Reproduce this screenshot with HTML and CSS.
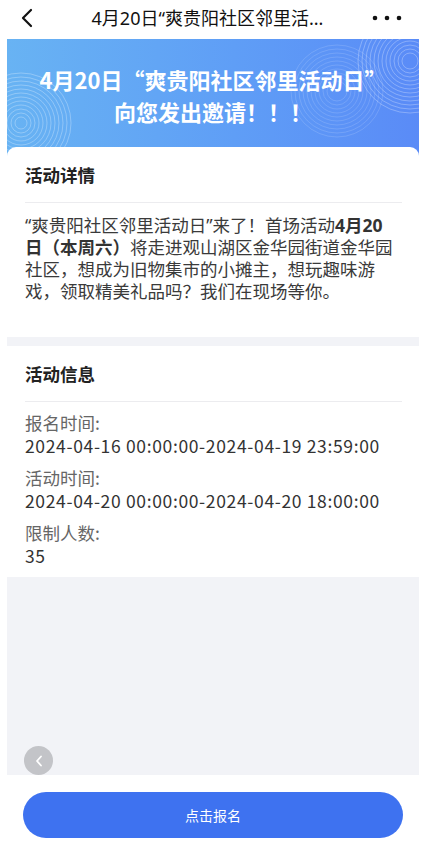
FILE: index.html
```html
<!DOCTYPE html>
<html lang="zh-CN">
<head>
<meta charset="utf-8">
<meta name="viewport" content="width=device-width, initial-scale=1">
<title>活动详情</title>
<link rel="stylesheet" href="styles.css">
</head>
<body>
<div class="page">
  <header class="topbar">
    <svg class="back" width="16" height="20" viewBox="0 0 16 20"><polyline points="12,2 4,10 12,18" fill="none" stroke="#111" stroke-width="2.2" stroke-linecap="round" stroke-linejoin="round"/></svg>
    <div class="title">4月20日“爽贵阳社区邻里活...</div>
    <svg class="more" width="30" height="6" viewBox="0 0 30 6"><circle cx="3" cy="3" r="2.3" fill="#111"/><circle cx="15" cy="3" r="2.3" fill="#111"/><circle cx="27" cy="3" r="2.3" fill="#111"/></svg>
  </header>
  <main class="main">
    <section class="banner">
      <svg class="rings" width="412" height="117" viewBox="0 0 412 117">
        <g fill="none" stroke="#ffffff" stroke-opacity="0.28" stroke-width="1">
          <circle cx="14" cy="84" r="6"/><circle cx="14" cy="84" r="10"/><circle cx="14" cy="84" r="14"/><circle cx="14" cy="84" r="18"/><circle cx="14" cy="84" r="22"/><circle cx="14" cy="84" r="26"/><circle cx="14" cy="84" r="30"/><circle cx="14" cy="84" r="34"/><circle cx="14" cy="84" r="38"/><circle cx="14" cy="84" r="42"/><circle cx="14" cy="84" r="46"/><circle cx="14" cy="84" r="50"/>
          <circle cx="403" cy="22" r="8"/><circle cx="403" cy="22" r="12"/><circle cx="403" cy="22" r="16"/><circle cx="403" cy="22" r="20"/><circle cx="403" cy="22" r="24"/><circle cx="403" cy="22" r="28"/><circle cx="403" cy="22" r="32"/><circle cx="403" cy="22" r="36"/><circle cx="403" cy="22" r="40"/><circle cx="403" cy="22" r="44"/><circle cx="403" cy="22" r="48"/><circle cx="403" cy="22" r="52"/>
        </g>
        <g fill="none" stroke="#ffffff" stroke-opacity="0.14" stroke-width="1">
          <circle cx="330" cy="52" r="10"/><circle cx="330" cy="52" r="14"/><circle cx="330" cy="52" r="18"/><circle cx="330" cy="52" r="22"/><circle cx="330" cy="52" r="26"/><circle cx="330" cy="52" r="30"/><circle cx="330" cy="52" r="34"/><circle cx="330" cy="52" r="38"/><circle cx="330" cy="52" r="42"/><circle cx="330" cy="52" r="46"/>
        </g>
      </svg>
      <h1 class="banner-title">4月20日“爽贵阳社区邻里活动日”<br>向您发出邀请！！！</h1>
    </section>
    <section class="card card-detail">
      <h2 class="card-title">活动详情</h2>
      <p class="desc">“爽贵阳社区邻里活动日”来了！首场活动<b>4月20日（本周六）</b>将走进观山湖区金华园街道金华园社区，想成为旧物集市的小摊主，想玩趣味游戏，领取精美礼品吗？我们在现场等你。</p>
    </section>
    <section class="card card-info">
      <h2 class="card-title">活动信息</h2>
      <div class="info-list">
        <div class="info-item"><div class="label">报名时间:</div><div class="value">2024-04-16 00:00:00-2024-04-19 23:59:00</div></div>
        <div class="info-item"><div class="label">活动时间:</div><div class="value">2024-04-20 00:00:00-2024-04-20 18:00:00</div></div>
        <div class="info-item"><div class="label">限制人数:</div><div class="value">35</div></div>
      </div>
    </section>
    <button class="float-back" aria-label="返回">
      <svg width="10" height="14" viewBox="0 0 10 14"><polyline points="7,2.5 3,7 7,11.5" fill="none" stroke="#fff" stroke-width="1.8" stroke-linecap="round" stroke-linejoin="round"/></svg>
    </button>
  </main>
  <footer class="footer">
    <button class="signup">点击报名</button>
  </footer>
</div>
</body>
</html>
```
FILE: styles.css
```css
* { box-sizing: border-box; }
html, body { margin: 0; padding: 0; background: #ffffff; }
body {
  font-family: "Noto Sans CJK SC", "Noto Sans", sans-serif;
  color: #333;
}
.page {
  width: 430px;
  height: 849px;
  display: flex;
  flex-direction: column;
  overflow: hidden;
}
.topbar {
  height: 39px;
  flex: none;
  display: flex;
  align-items: center;
  justify-content: space-between;
  padding: 0 28px 3px 19px;
}
.topbar .title {
  font-family: "Noto Sans", "Noto Sans CJK SC", sans-serif;
  font-size: 18px;
  color: #111;
  line-height: 24px;
  margin-left: 44px;
  flex: 1;
  text-align: center;
  padding-right: 36px;
}
.back { flex: none; }
.more { flex: none; }
.main {
  flex: 1;
  margin: 0 11px 0 7px;
  background: #f2f3f7;
  position: relative;
  display: flex;
  flex-direction: column;
}
.banner {
  height: 117px;
  background: linear-gradient(90deg, #68b3f3 0%, #5f9ef6 55%, #5a8bf7 100%);
  position: relative;
  overflow: hidden;
  display: flex;
  align-items: flex-start;
  justify-content: center;
}
.rings { position: absolute; left: 0; top: 0; }
.banner-title {
  position: relative;
  margin: 24px 0 0;
  font-size: 22px;
  line-height: 32px;
  font-weight: 700;
  color: #ffffff;
  text-align: center;
}
.card {
  background: #ffffff;
  padding: 0 17px 0 18px;
  position: relative;
}
.card-detail {
  margin-top: -9px;
  border-radius: 9px 9px 0 0;
  padding-bottom: 35px;
}
.card-info {
  margin-top: 9px;
  padding-bottom: 9px;
}
.card-title {
  margin: 0;
  height: 56px;
  line-height: 56px;
  font-size: 17.5px;
  font-weight: 700;
  color: #222;
  border-bottom: 1px solid #ececef;
}
.desc {
  font-family: "Noto Sans", "Noto Sans CJK SC", sans-serif;
  margin: 11px 6px 0 0;
  font-size: 17.5px;
  line-height: 22px;
  color: #3a3a3a;
}
.desc b { font-weight: 700; color: #333; }
.info-list {
  padding-top: 10px;
  display: flex;
  flex-direction: column;
  gap: 9px;
}
.info-item .label {
  font-size: 17.5px;
  line-height: 22px;
  color: #666;
}
.info-item .value {
  font-size: 17.5px;
  line-height: 24px;
  color: #333;
  letter-spacing: 0.65px;
}
.float-back {
  position: absolute;
  left: 17px;
  bottom: 0;
  width: 29px;
  height: 29px;
  border-radius: 50%;
  border: 0;
  padding: 0;
  background: #c3c4c8;
  display: flex;
  align-items: center;
  justify-content: center;
}
.footer {
  flex: none;
  height: 74px;
  padding: 17px 27px 0 23px;
}
.signup {
  width: 100%;
  height: 46px;
  border: 0;
  border-radius: 23px;
  background: #3e72f0;
  color: #ffffff;
  font-family: "Noto Sans CJK SC", sans-serif;
  font-size: 14px;
}
```
